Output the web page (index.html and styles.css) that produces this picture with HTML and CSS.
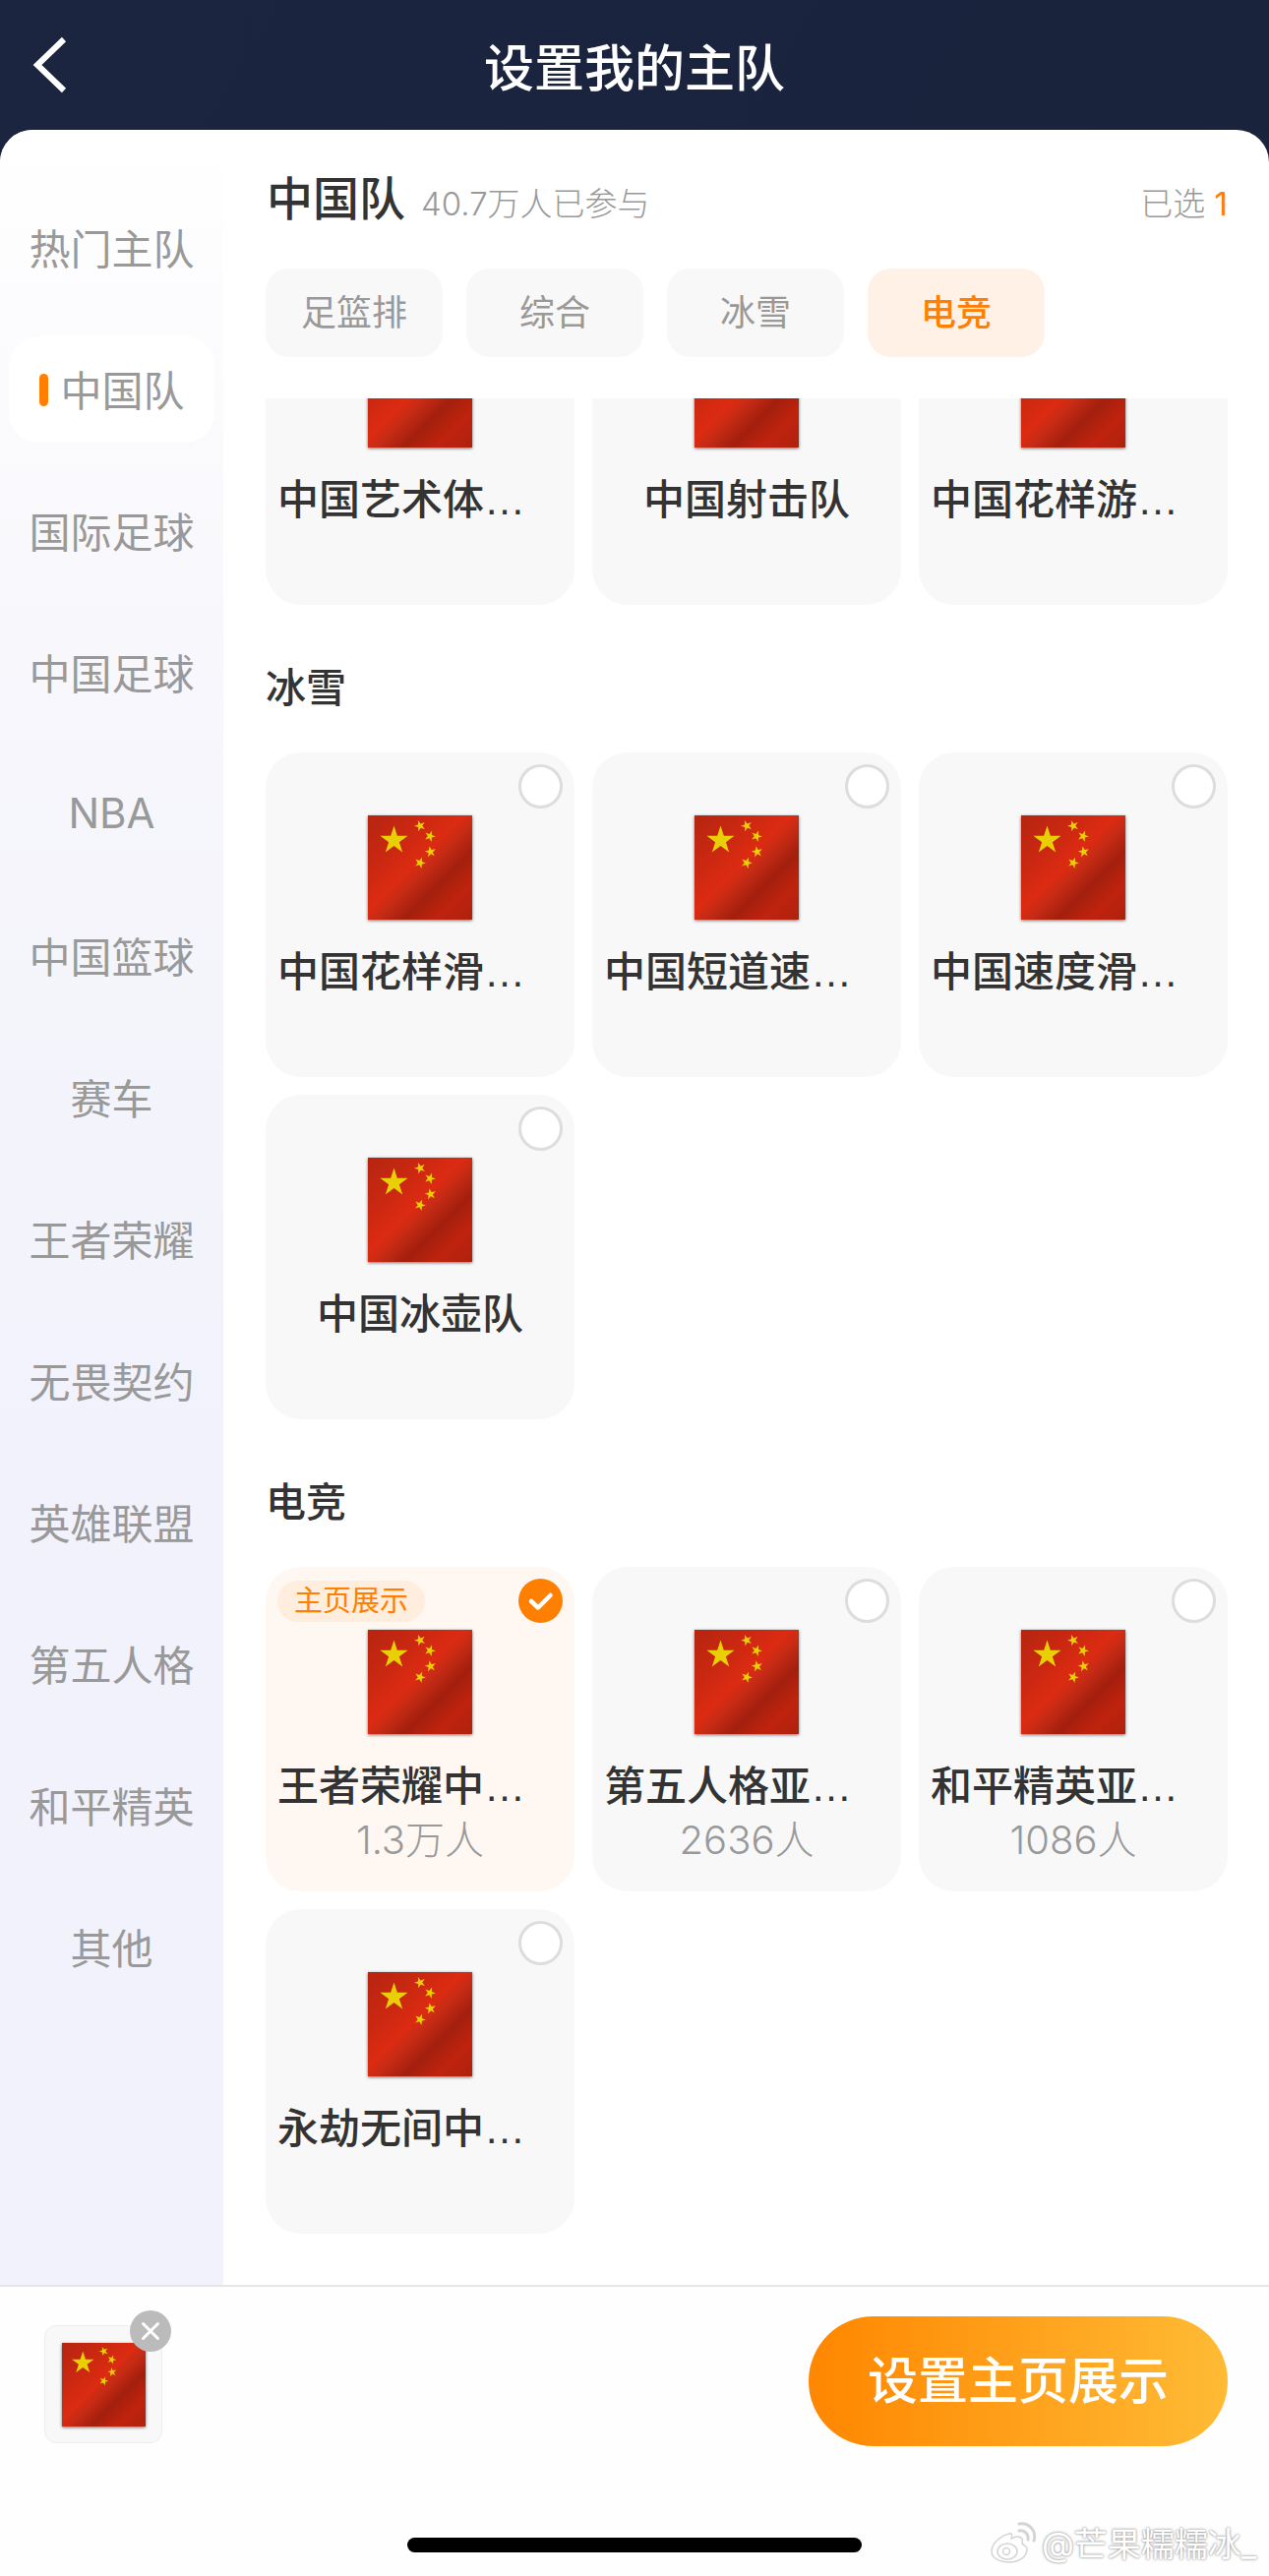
FILE: index.html
```html
<!DOCTYPE html>
<html>
<head>
<meta name="viewport" content="width=device-width, initial-scale=1.0" charset="UTF-8">
<title>设置我的主队</title>
<link rel="stylesheet" href="styles.css">
</head>
<body>
<svg class="defs" width="0" height="0">
	<defs>
		<linearGradient id="flag-sheen" x1="0" y1="0" x2="1" y2="1">
			<stop offset="0" stop-color="#b52510"/>
			<stop offset="0.28" stop-color="#cb2811"/>
			<stop offset="0.46" stop-color="#dc2b12"/>
			<stop offset="0.54" stop-color="#c62b15"/>
			<stop offset="0.67" stop-color="#a31f0d"/>
			<stop offset="0.82" stop-color="#bf230e"/>
			<stop offset="1" stop-color="#ae220e"/>
		</linearGradient>
		<polygon id="star" points="0,-14 3.14,-4.33 13.3,-4.33 5.09,1.65 8.23,11.33 0,5.35 -8.23,11.33 -5.09,1.65 -13.3,-4.33 -3.14,-4.33"/>
		<g id="flag-cn">
			<rect width="100" height="100" fill="url(#flag-sheen)"/>
			<g fill="#e8cf06">
				<use href="#star" transform="translate(25 24)"/>
				<use href="#star" transform="translate(50 10) rotate(-20) scale(.4)"/>
				<use href="#star" transform="translate(59.5 20) rotate(20) scale(.4)"/>
				<use href="#star" transform="translate(60 35) rotate(-10) scale(.4)"/>
				<use href="#star" transform="translate(50 45.5) rotate(20) scale(.4)"/>
			</g>
		</g>
	</defs>
</svg>

<div class="page">
	<div class="topbar">
		<svg class="back" width="36" height="60" viewBox="0 0 36 60"><polyline points="32,4 5,30 32,56" fill="none" stroke="#fff" stroke-width="6"/></svg>
		<div class="topbar_title">设置我的主队</div>
	</div>

	<div class="panel">
		<div class="main">
			<div class="side">
				<div class="side_item">热门主队</div>
				<div class="side_item side_active"><span class="side_mark"></span>中国队</div>
				<div class="side_item">国际足球</div>
				<div class="side_item">中国足球</div>
				<div class="side_item">NBA</div>
				<div class="side_item">中国篮球</div>
				<div class="side_item">赛车</div>
				<div class="side_item">王者荣耀</div>
				<div class="side_item">无畏契约</div>
				<div class="side_item">英雄联盟</div>
				<div class="side_item">第五人格</div>
				<div class="side_item">和平精英</div>
				<div class="side_item">其他</div>
			</div>

			<div class="content">
				<div class="head">
					<span class="head_title">中国队</span>
					<span class="head_sub">40.7万人已参与</span>
					<span class="head_picked">已选 <b>1</b></span>
				</div>
				<div class="tabs">
					<div class="tab">足篮排</div>
					<div class="tab">综合</div>
					<div class="tab">冰雪</div>
					<div class="tab tab_on">电竞</div>
				</div>

				<div class="list">
					<div class="list_inner">
						<div class="grid">
							<div class="card"><svg class="flag" viewBox="0 0 100 100"><use href="#flag-cn"/></svg><div class="name name_cut">中国艺术体…</div></div>
							<div class="card"><svg class="flag" viewBox="0 0 100 100"><use href="#flag-cn"/></svg><div class="name">中国射击队</div></div>
							<div class="card"><svg class="flag" viewBox="0 0 100 100"><use href="#flag-cn"/></svg><div class="name name_cut">中国花样游…</div></div>
						</div>

						<div class="section">冰雪</div>
						<div class="grid">
							<div class="card"><span class="radio"></span><svg class="flag" viewBox="0 0 100 100"><use href="#flag-cn"/></svg><div class="name name_cut">中国花样滑…</div></div>
							<div class="card"><span class="radio"></span><svg class="flag" viewBox="0 0 100 100"><use href="#flag-cn"/></svg><div class="name name_cut">中国短道速…</div></div>
							<div class="card"><span class="radio"></span><svg class="flag" viewBox="0 0 100 100"><use href="#flag-cn"/></svg><div class="name name_cut">中国速度滑…</div></div>
							<div class="card"><span class="radio"></span><svg class="flag" viewBox="0 0 100 100"><use href="#flag-cn"/></svg><div class="name">中国冰壶队</div></div>
						</div>

						<div class="section">电竞</div>
						<div class="grid">
							<div class="card card_on">
								<span class="badge">主页展示</span>
								<svg class="radio_on" viewBox="0 0 45 45"><circle cx="22.5" cy="22.5" r="22.5" fill="#ff8000"/><polyline points="13,23 20,29.5 32.5,17" fill="none" stroke="#fff" stroke-width="4.5" stroke-linecap="round" stroke-linejoin="round"/></svg>
								<svg class="flag" viewBox="0 0 100 100"><use href="#flag-cn"/></svg>
								<div class="name name_cut">王者荣耀中…</div>
								<div class="count">1.3万人</div>
							</div>
							<div class="card"><span class="radio"></span><svg class="flag" viewBox="0 0 100 100"><use href="#flag-cn"/></svg><div class="name name_cut">第五人格亚…</div><div class="count">2636人</div></div>
							<div class="card"><span class="radio"></span><svg class="flag" viewBox="0 0 100 100"><use href="#flag-cn"/></svg><div class="name name_cut">和平精英亚…</div><div class="count">1086人</div></div>
							<div class="card"><span class="radio"></span><svg class="flag" viewBox="0 0 100 100"><use href="#flag-cn"/></svg><div class="name name_cut">永劫无间中…</div></div>
						</div>
					</div>
				</div>
			</div>
		</div>

		<div class="footer">
			<div class="footer_row">
				<div class="thumb">
					<svg class="thumb_flag" viewBox="0 0 100 100"><use href="#flag-cn"/></svg>
					<svg class="thumb_close" viewBox="0 0 42 42"><circle cx="21" cy="21" r="21" fill="#bbb"/><path d="M13.5 13.5 L28.5 28.5 M28.5 13.5 L13.5 28.5" stroke="#fff" stroke-width="3" stroke-linecap="round"/></svg>
				</div>
				<div class="submit">设置主页展示</div>
			</div>
			<div class="homebar"></div>
		</div>
	</div>

	<!-- watermark sits on top of the screenshot -->
	<div class="watermark">
		<svg class="watermark_logo" width="48" height="42" viewBox="0 0 48 42">
			<g fill="#fff" stroke="#d4d4d4" stroke-width="1.5">
				<path d="M20 12 C11 14 2 22 2 30 C2 37 11 41 20 41 C30 41 38 35 38 28 C38 24 34 23 33 22 C34 18 33 15 28 15 C25 15 23 17 22 17 C23 14 23 11 20 12 Z"/>
				<ellipse cx="18" cy="30" rx="10" ry="8"/>
				<circle cx="17" cy="30" r="3.5"/>
			</g>
			<path d="M30 9 C36 8 40 13 39 18 M30 2 C40 0 48 9 45 19" fill="none" stroke="#d4d4d4" stroke-width="3" stroke-linecap="round"/>
		</svg>
		<span class="watermark_text">@芒果糯糯冰_</span>
	</div>
</div>
</body>
</html>
```

FILE: styles.css
```css
* {
  box-sizing: border-box;
}

html, body {
  margin: 0;
  padding: 0;
}

body {
  font-family: Inter, "Noto Sans CJK SC", sans-serif;
  color: #333;
}

.defs {
  position: absolute;
}

.page {
  position: relative;
  width: 1290px;
  height: 2619px;
  overflow: hidden;
  background: linear-gradient(120deg, #1b2540, #1a233c 45%, #1d2845);
}

.topbar {
  display: grid;
  grid-template-columns: 1fr auto 1fr;
  align-items: center;
  height: 132px;
}

.back {
  display: block;
  margin-left: 33px;
}

.topbar_title {
  font-size: 51px;
  font-weight: 500;
  color: #fff;
}

.panel {
  height: 2487px;
  background: #fff;
  border-radius: 33px 33px 0 0;
  overflow: hidden;
}

.main {
  display: flex;
  height: 2193px;
  border-bottom: 2px solid #e6e6e6;
}

.side {
  width: 227px;
  flex: none;
  display: flex;
  flex-direction: column;
  gap: 36px;
  padding: 66px 9px 0;
  background: linear-gradient(180deg, #fff, #f7f7fc 25%, #f1f2fb 60%);
}

.side_item {
  display: flex;
  align-items: center;
  justify-content: center;
  height: 108px;
  flex: none;
  padding-bottom: 4px;
  font-size: 42px;
  color: #999;
}

.side_active {
  background: #fff;
  border-radius: 30px;
}

.side_mark {
  width: 9px;
  height: 33px;
  margin: 4px 12px 0 1px;
  background: #ff8000;
  border-radius: 5px;
}

.content {
  flex: 1;
  min-width: 0;
  padding: 40px 42px 0 43px;
}

.head {
  display: flex;
  align-items: baseline;
  height: 60px;
  padding-left: 1px;
}

.head_title {
  font-size: 47px;
  font-weight: 500;
  line-height: 60px;
}

.head_sub {
  margin-left: 16px;
  font-size: 33px;
  font-weight: 300;
  color: #999;
}

.head_picked {
  margin-left: auto;
  font-size: 33px;
  font-weight: 300;
  color: #999;
}

.head_picked b {
  font-weight: 400;
  color: #ff8000;
}

.tabs {
  display: flex;
  gap: 24px;
  margin-top: 41px;
}

.tab {
  width: 180px;
  height: 90px;
  line-height: 90px;
  text-align: center;
  font-size: 36px;
  color: #999;
  background: #f8f8f8;
  border-radius: 24px;
}

.tab_on {
  color: #ff8000;
  font-weight: 500;
  background: #fff1e6;
}

.list {
  height: 1918px;
  margin-top: 42px;
  overflow: hidden;
}

.list_inner {
  margin-top: -120px;
}

.grid {
  display: grid;
  grid-template-columns: repeat(3, 314px);
  gap: 18px;
}

.section {
  margin: 54px 0 36px;
  font-size: 41px;
  font-weight: 500;
  line-height: 60px;
}

.card {
  position: relative;
  display: flex;
  flex-direction: column;
  align-items: center;
  height: 330px;
  padding-top: 64px;
  background: #f8f8f8;
  border-radius: 36px;
}

.card_on {
  background: #fff7f1;
}

.flag {
  display: block;
  width: 106px;
  height: 106px;
  flex: none;
  box-shadow: 0 1px 3px rgba(0, 0, 0, 0.55);
}

/* the ellipsis comes from Liberation Sans, one em wide with wide dots */
.name {
  margin-top: 26px;
  font-family: "Liberation Sans", "Noto Sans CJK SC", sans-serif;
  font-size: 42px;
  font-weight: 500;
  line-height: 56px;
  white-space: nowrap;
  color: #333;
}

.name_cut {
  align-self: flex-start;
  margin-left: 12px;
}

.count {
  margin-top: 1px;
  font-size: 40px;
  font-weight: 300;
  line-height: 50px;
  color: #999;
}

.radio {
  position: absolute;
  top: 12px;
  right: 12px;
  width: 45px;
  height: 45px;
  background: #fff;
  border: 3px solid #ddd;
  border-radius: 50%;
}

.radio_on {
  position: absolute;
  top: 12px;
  right: 12px;
  width: 45px;
  height: 45px;
}

.badge {
  position: absolute;
  top: 14px;
  left: 12px;
  width: 150px;
  height: 42px;
  line-height: 42px;
  text-align: center;
  font-size: 29px;
  color: #ff8000;
  background: #ffeedd;
  border-radius: 21px;
}

.footer {
  height: 294px;
  background: #fefefe;
  padding: 30px 42px 0 45px;
}

.footer_row {
  display: flex;
  justify-content: space-between;
  align-items: flex-start;
}

.thumb {
  position: relative;
  display: flex;
  align-items: center;
  justify-content: center;
  width: 120px;
  height: 120px;
  margin-top: 9px;
  background: #f8f8f8;
  border: 1px solid #eee;
  border-radius: 12px;
}

.thumb_flag {
  display: block;
  width: 85px;
  height: 85px;
  box-shadow: 0 1px 3px rgba(0, 0, 0, 0.55);
}

.thumb_close {
  position: absolute;
  top: -16px;
  right: -10px;
  width: 42px;
  height: 42px;
}

.submit {
  width: 426px;
  height: 132px;
  line-height: 132px;
  text-align: center;
  font-size: 51px;
  font-weight: 500;
  color: #fff;
  background: linear-gradient(90deg, #ff8600, #ffbb35);
  border-radius: 66px;
}

.homebar {
  width: 462px;
  height: 15px;
  margin: 93px 0 0 369px;
  background: #000;
  border-radius: 8px;
}

.watermark {
  position: absolute;
  top: 2560px;
  left: 1006px;
  display: flex;
  align-items: center;
  gap: 5px;
}

.watermark_text {
  font-size: 34px;
  white-space: nowrap;
  color: #fff;
  text-shadow: 0 0 3px #999, 0 0 2px #aaa;
}
```
